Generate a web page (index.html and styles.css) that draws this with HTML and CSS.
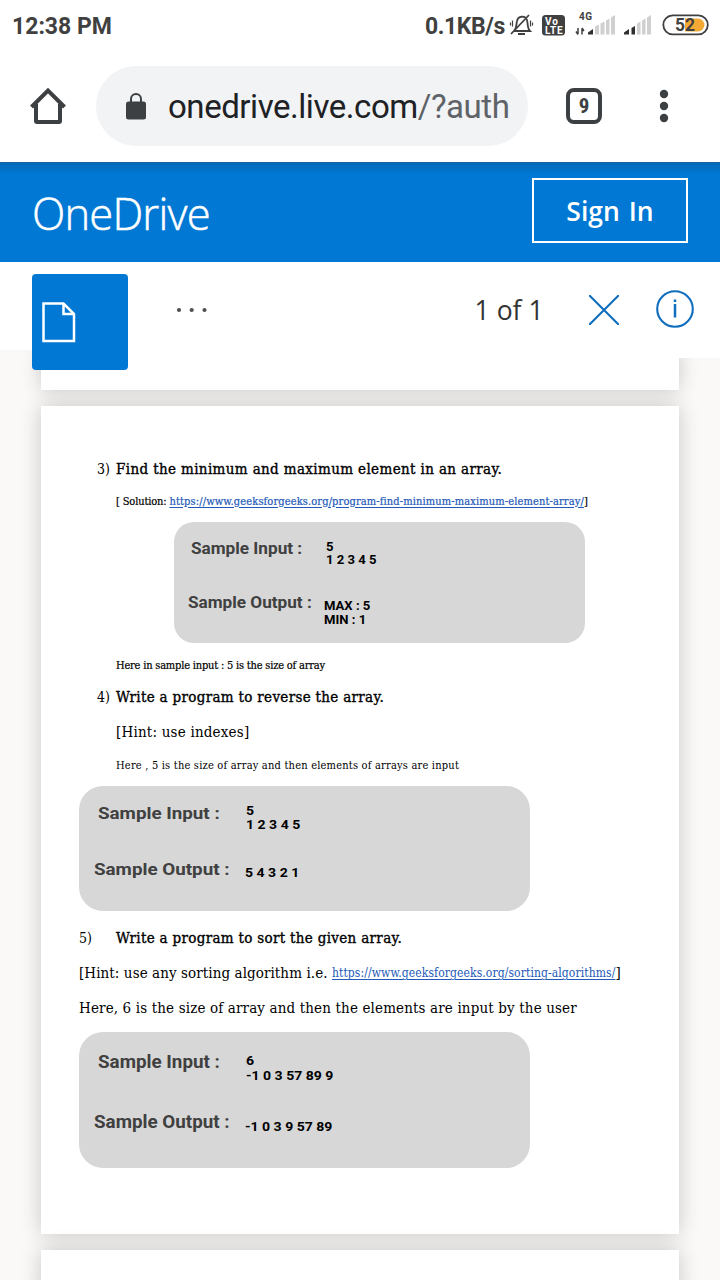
FILE: index.html
```html
<!DOCTYPE html>
<html lang="en">
<head>
<meta charset="utf-8">
<title>OneDrive</title>
<link rel="stylesheet" href="styles.css">
</head>
<body>
<div class="status">
  <span class="clock">12:38 PM</span>
  <span class="speed">0.1KB/s</span>
  <svg class="status-icons" width="206" height="36" viewBox="506 8 206 36">
    <g fill="none" stroke="#404040" stroke-width="1.8">
      <path d="M514 31c3-3 2-6 3-10 1-5 8-6 10-1 1 3 0 8 3 11zM511 34l18-19"/>
      <path d="M512.500 20.500v6M530.500 20.500v6M510.500 22.500v3M532.500 22.500v3" stroke-width="1.200"/>
      <path d="M518 34h7" stroke-width="2"/>
    </g>
    <rect x="542" y="15" width="23" height="20.500" rx="3.500" fill="#404040"/>
    <text x="545" y="24.500" class="volte" textLength="13">Vo</text>
    <text x="545" y="33.500" class="volte" textLength="17.500">LTE</text>
    <text x="579" y="20" class="g4" textLength="13">4G</text>
    <path d="M578 28v6M576 31.500l2 3M582 34.500v-6M584 31l-2-3" fill="none" stroke="#404040" stroke-width="1.500"/>
    <path d="M588 34.500v-2l5-3.500v5.500z" fill="#303030"/>
    <path d="M595 34.500v-8l4-2v10zM600.500 34.500v-11l4-2v13zM606 34.500v-14l3.500-2v16zM611 34.500v-17l4-2.500v19.500z" fill="#d0d0d0"/>
    <path d="M624 34.500v-2l5-3.500v5.500zM631.500 34.500v-6.500l3.500-2v8.500z" fill="#303030"/>
    <path d="M637 34.500v-11l3.500-2v13zM642 34.500v-14l3.500-2v16zM647 34.500v-17l4-2.500v19.500z" fill="#d0d0d0"/>
    <path d="M685 18.500h13a6.500 6.500 0 0 1 0 13h-13z" fill="#f5a935"/>
    <rect x="663.300" y="15.300" width="44.500" height="19" rx="9.500" fill="none" stroke="#404040" stroke-width="1.800"/>
    <text x="675" y="31" class="charge">52</text>
  </svg>
</div>
<div class="chrome">
  <svg class="home" width="40" height="40" viewBox="28 86 40 40"><path d="M31.500 107L48 90.500 64.500 107M36 104v17a1 1 0 0 0 1 1h22a1 1 0 0 0 1-1v-17" fill="none" stroke="#3c4043" stroke-width="4"/></svg>
  <div class="omnibox">
    <svg class="lock" width="20" height="27" viewBox="0 0 20 27"><rect y="8.500" width="20" height="18" rx="2.500" fill="#3c4043"/><path d="M5 9V6a5 5 0 0 1 10 0v3" fill="none" stroke="#3c4043" stroke-width="2"/></svg>
    <span class="url">onedrive.live.com<i>/?auth</i></span>
  </div>
  <span class="tabs">9</span>
  <svg class="menu" width="10" height="34" viewBox="0 0 10 34" fill="#3c4043"><circle cx="5" cy="5" r="4.200"/><circle cx="5" cy="17" r="4.200"/><circle cx="5" cy="29" r="4.200"/></svg>
</div>
<header class="suite"><span class="brand">OneDrive</span><a class="signin">Sign In</a></header>
<div class="toolbar">
  <div class="tool-edge"></div>
  <div class="tool-main">
    <div class="file-tile"><svg width="34" height="41" viewBox="0 0 34 41"><path d="M1.500 1.500h20l10.500 10.500v27h-30.500zM21.500 1.500v10.500h10.500" fill="none" stroke="#fff" stroke-width="2.500"/></svg></div>
    <svg class="dots" width="32" height="6" viewBox="0 0 32 6" fill="#505050"><circle cx="3" cy="3" r="2.100"/><circle cx="15.700" cy="3" r="2.100"/><circle cx="28.500" cy="3" r="2.100"/></svg>
    <span class="count">1 of 1</span>
    <svg class="close" width="30" height="30" viewBox="0 0 30 30"><path d="M0 0L30 30M30 0L0 30" stroke="#106ebe" stroke-width="2.100"/></svg>
    <svg class="info" width="38" height="38" viewBox="0 0 38 38"><circle cx="19" cy="19" r="17.800" fill="none" stroke="#106ebe" stroke-width="2.100"/><path d="M19 14v13.500M19 9.500v2.500" stroke="#106ebe" stroke-width="2.500"/></svg>
  </div>
</div>
<main class="viewer">
  <div class="page first"></div>
  <div class="page">
    <h2 class="line q3"><span class="num">3)</span><span>Find the minimum and maximum element in an array.</span></h2>
    <p class="line solution"><span>[ Solution: </span><a>https://www.geeksforgeeks.org/program-find-minimum-maximum-element-array/</a><span>]</span></p>
    <section class="sample small">
      <div class="row in"><span class="label">Sample Input :</span><span class="value">5<br>1 2 3 4 5</span></div>
      <div class="row out"><span class="label">Sample Output :</span><span class="value">MAX : 5<br>MIN : 1</span></div>
    </section>
    <p class="line note3">Here in sample input : 5 is the size of array</p>
    <h2 class="line q4"><span class="num">4)</span><span>Write a program to reverse the array.</span></h2>
    <p class="line hint4">[Hint: use indexes]</p>
    <p class="line note4">Here , 5 is the size of array and then elements of arrays are input</p>
    <section class="sample medium">
      <div class="row in"><span class="label">Sample Input :</span><span class="value">5<br>1 2 3 4 5</span></div>
      <div class="row out"><span class="label">Sample Output :</span><span class="value">5 4 3 2 1</span></div>
    </section>
    <h2 class="line q5"><span class="num">5)</span><span>Write a program to sort the given array.</span></h2>
    <p class="line hint5"><span>[Hint: use any sorting algorithm i.e. </span><a>https://www.geeksforgeeks.org/sorting-algorithms/</a><span>]</span></p>
    <p class="line note5">Here, 6 is the size of array and then the elements are input by the user</p>
    <section class="sample large">
      <div class="row in"><span class="label">Sample Input :</span><span class="value">6<br>-1 0 3 57 89 9</span></div>
      <div class="row out"><span class="label">Sample Output :</span><span class="value">-1 0 3 9 57 89</span></div>
    </section>
  </div>
  <div class="page last"></div>
</main>
</body>
</html>
```
FILE: styles.css
```css
* { box-sizing: border-box; }
body { margin: 0; width: 720px; height: 1280px; overflow: hidden; display: flex; flex-direction: column; background: #fff; font-family: Roboto, sans-serif; }
h2, p { margin: 0; }
svg { display: block; flex: none; }

.status { height: 52px; flex: none; display: flex; align-items: center; padding: 0 8px 0 12px; color: #404040; font-size: 23px; font-weight: 700; white-space: nowrap; }
.clock { width: 413px; }
.speed { width: 81px; letter-spacing: -.4px; }
.volte { font: 700 10px Roboto, sans-serif; fill: #fff; }
.g4 { font: 700 10px Roboto, sans-serif; fill: #404040; }
.charge { font: 700 17.500px Roboto, sans-serif; fill: #404040; }

.chrome { height: 110px; flex: none; display: flex; align-items: center; padding: 0 51px 2px 28px; }
.omnibox { width: 432px; height: 80px; margin-left: 28px; padding-left: 30px; border-radius: 40px; background: #f1f3f4; display: flex; align-items: center; gap: 22px; }
.url { font-size: 33px; letter-spacing: -.45px; color: #202124; white-space: nowrap; padding-top: 1px; }
.url i { font-style: normal; color: #5f6368; }
.tabs { width: 36px; height: 36px; margin-left: 38px; border: 4px solid #3c4043; border-radius: 8px; font: 700 21px/28px "Roboto Condensed", Roboto, sans-serif; text-align: center; color: #3c4043; }
.menu { margin-left: 57px; }

.suite { height: 100px; flex: none; display: flex; align-items: center; justify-content: space-between; padding: 0 32px 4px; background: linear-gradient(#0369b8, #0078d4 12px); color: #fff; font-family: "Open Sans", sans-serif; border-top: 1px solid #1a62a0; }
.brand { font-size: 43.500px; font-weight: 300; letter-spacing: -.8px; padding-top: 5px; -webkit-text-stroke: .5px #fff; }
.signin { width: 156px; height: 65px; margin-top: -1px; border: 2px solid #fff; font-size: 26.500px; font-weight: 600; line-height: 62px; word-spacing: 2px; text-align: center; }

.toolbar { position: relative; z-index: 1; height: 88px; flex: none; display: flex; align-items: flex-start; }
.tool-edge { width: 32px; height: 88px; background: #fff; }
.tool-main { width: 688px; height: 96px; background: #fff; display: flex; align-items: center; padding-right: 26px; }
.file-tile { width: 96px; height: 96px; margin-top: 24px; padding: 28px 10px; border-radius: 4px; background: #0078d4; }
.dots { margin: 0 0 0 48px; }
.count { width: 115px; margin-left: 267px; font: 400 26.500px "Open Sans", sans-serif; color: #333; }
.info { margin-left: 37px; margin-bottom: 2px; }

.viewer { flex: 1; padding: 0 41px; display: flex; flex-direction: column; gap: 16px; overflow: hidden; background: #faf9f8; }
.page { flex: none; height: 828px; padding: 49px 0 0; background: #fff; box-shadow: 0 0 20px rgba(0, 0, 0, .2); font-family: "DejaVu Serif Condensed", "DejaVu Serif", serif; color: #000; }
.first { height: 40px; padding: 0; }
.last { height: 200px; }

.line { display: flex; align-items: center; white-space: pre; font-weight: 400; padding-left: 75px; }
.line a { color: #2259b8; text-decoration: underline; text-decoration-thickness: 1px; text-underline-offset: 2px; }
.num { width: 19px; font-size: 14px; letter-spacing: 0; -webkit-text-stroke: 0; }
.q3, .q4, .q5 { font-size: 15px; padding-left: 56px; -webkit-text-stroke: .35px #000; letter-spacing: .32px; }
.q3 { height: 28px; letter-spacing: .37px; }
.q4 { height: 20px; }
.q5 { height: 46px; margin-top: 4px; padding-left: 38px; }
.q5 .num { width: 37px; }
.solution { height: 36px; font-size: 11px; letter-spacing: -.15px; -webkit-text-stroke: .2px; }
.solution a { letter-spacing: .12px; }
.note3 { height: 44px; font-size: 11px; letter-spacing: -.2px; -webkit-text-stroke: .2px; }
.hint4 { height: 50px; font-size: 15px; letter-spacing: .2px; }
.note4 { height: 16px; font-size: 11px; letter-spacing: .2px; }
.hint5 { height: 24px; font-size: 15px; letter-spacing: .08px; padding-left: 38px; }
.hint5 a { font-size: 12px; letter-spacing: .1px; }
.note5 { height: 46px; font-size: 15px; letter-spacing: .14px; padding-left: 38px; }

.sample { background: #d7d7d7; font-family: Roboto, sans-serif; font-weight: 700; white-space: nowrap; display: flow-root; }
.row { display: flex; align-items: flex-start; }
.label { flex: none; color: #404040; font-size: 16.500px; line-height: 18px; transform-origin: left; }
.value { color: #000; font-size: 12px; transform-origin: left; }

.small { width: 411px; height: 121px; margin: 3px 0 0 133px; border-radius: 20px; }
.small .label { transform: scaleX(1.04); }
.small .in { height: 54px; margin: 18px 0 0 17px; }
.small .in .label { width: 135px; }
.small .out { margin-left: 14px; }
.small .out .label { width: 136px; }
.small .value { line-height: 13px; margin-top: .500px; transform: scaleX(1.09); }
.small .out .value { line-height: 13.500px; margin-top: 6px; }

.medium, .large { width: 451px; margin-left: 38px; border-radius: 24px; }
.medium { height: 125px; margin-top: 13px; }
.medium .in { height: 56px; margin: 18px 0 0 19px; }
.medium .label { font-size: 17px; transform: scaleX(1.105); }
.medium .in .label, .large .in .label { width: 148px; }
.medium .out, .large .out { margin-left: 15px; }
.medium .out .label, .large .out .label { width: 150.500px; }
.medium .value { line-height: 14px; transform: scaleX(1.17); }
.medium .out .value { margin-top: 6px; }
.large { height: 136px; margin-top: 1px; }
.large .label { font-size: 18px; transform: scaleX(1.045); }
.large .in { height: 60px; margin: 21px 0 0 19px; }
.large .value { font-size: 13px; line-height: 15px; transform: scaleX(1.08); }
.large .out .value { margin-top: 6px; }
```
